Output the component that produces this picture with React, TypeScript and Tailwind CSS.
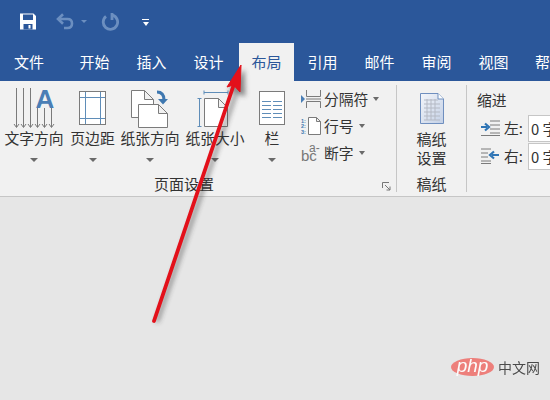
import React from "react";

const tabs = ["开始", "插入", "设计", "布局", "引用", "邮件", "审阅", "视图"];

const Caret = ({ className = "" }: { className?: string }) => (
  <span className={`block w-0 h-0 border-x-[4px] border-t-[4px] border-x-transparent border-t-[#6a6a6a] ${className}`} />
);

const BigButton = ({ width, label, children }: { width: string; label: string; children: React.ReactNode }) => (
  <div className={`${width} flex flex-col items-center shrink-0`}>
    <div className="h-[41px] flex items-start justify-center">{children}</div>
    <div className="h-[18px] leading-[18px] text-[14.8px] whitespace-nowrap">{label}</div>
    <Caret className="mt-[11px]" />
  </div>
);

const Page = ({ x, y, w, h, fold = 9 }: { x: number; y: number; w: number; h: number; fold?: number }) => (
  <path
    d={`M${x} ${y}H${x + w - fold}L${x + w} ${y + fold}V${y + h}H${x}Z M${x + w - fold} ${y}V${y + fold}H${x + w}`}
    fill="#fff"
    stroke="#7b7b7b"
    strokeWidth="1"
  />
);

const App = () => {
  return (
    <div className="relative w-[550px] h-[400px] overflow-hidden flex flex-col bg-[#e6e6e6] text-[#333] font-['Noto_Sans_CJK_SC','Noto_Sans',sans-serif]">
      {/* quick access bar */}
      <div className="h-[43px] bg-[#2b579a] flex items-center shrink-0 pl-[20px]">
        <svg width="16" height="17" viewBox="0 0 16 17">
          <path d="M0 0.5H13.5L16 3V16.5H0Z" fill="#fff" />
          <rect x="3" y="1.5" width="10" height="5.5" fill="#2b579a" />
          <rect x="3.5" y="11" width="9" height="5.5" fill="#2b579a" />
          <rect x="8.5" y="12" width="2" height="3.5" fill="#fff" />
        </svg>
        <svg className="ml-[20px]" width="18" height="17" viewBox="0 0 18 17" fill="none" stroke="#6c8fc0" strokeWidth="2.6">
          <path d="M2.5 6H11.5C14.5 6 16 8 16 10.5C16 13 14.5 15 11.5 15H8" />
          <path d="M7 1.2L2 6L7 10.8" />
        </svg>
        <Caret className="ml-[7px] !border-t-[#6c8fc0] !border-x-[3px] !border-t-[3px]" />
        <svg className="ml-[14px]" width="18" height="19" viewBox="0 0 18 19" fill="none" stroke="#6c8fc0" strokeWidth="2.8">
          <path d="M5 4.4A7.2 7.2 0 1 0 11.5 3.2" />
          <path d="M11 1V8" />
        </svg>
        <div className="ml-[23px] flex flex-col items-center gap-[2px] mt-[1px]">
          <span className="block w-[7px] h-px bg-white" />
          <Caret className="!border-t-white !border-x-[3.5px]" />
        </div>
      </div>

      {/* tabs */}
      <div className="h-[38px] bg-[#2b579a] flex shrink-0 text-white text-[15px] leading-[38px]">
        <div className="w-[66px] pl-[14px] shrink-0">文件</div>
        {tabs.map((t) =>
          t === "布局" ? (
            <div key={t} className="w-[55px] ml-[2px] shrink-0 text-center bg-[#f1f1f1] text-[#2b579a]">
              {t}
            </div>
          ) : (
            <div key={t} className="w-[57px] shrink-0 text-center">
              {t}
            </div>
          ),
        )}
        <div className="pl-[13px] whitespace-nowrap">帮助</div>
      </div>

      {/* ribbon */}
      <div className="h-[116px] shrink-0 bg-[#f1f1f1] border-b border-[#c6c6c6] flex">
        <div className="w-[396px] shrink-0 flex flex-col pt-[7px] relative">
          <div className="flex h-[90px] pl-[3px]">
            <BigButton width="w-[62px]" label="文字方向">
              <svg width="42" height="41" viewBox="0 0 42 41" fill="none" stroke="#7a7a7a">
                {[3.5, 10.5, 17.5].map((x) => (
                  <path key={x} d={`M${x} 0V39M${x - 2.5} 36L${x} 39.5L${x + 2.5} 36`} />
                ))}
                {[24.5, 31.5, 38.5].map((x) => (
                  <path key={x} d={`M${x} 20V39M${x - 2.5} 36L${x} 39.5L${x + 2.5} 36`} />
                ))}
                <text x="32" y="20" textAnchor="middle" fontSize="26" fontWeight="700" fontFamily="Liberation Sans" fill="#4a7eb5" stroke="none">
                  A
                </text>
              </svg>
            </BigButton>
            <BigButton width="w-[55px]" label="页边距">
              <svg className="mt-[3px]" width="27" height="35" viewBox="0 0 27 35" fill="#fff">
                <rect x="0.5" y="0.5" width="26" height="33" stroke="#7b7b7b" />
                <path d="M6.5 1V33M21.5 1V33M1 6.5H26M1 27.5H26" stroke="#5f8db8" fill="none" />
              </svg>
            </BigButton>
            <BigButton width="w-[60px]" label="纸张方向">
              <svg className="mt-[2px]" width="38" height="38" viewBox="0 0 38 38">
                <Page x={0.5} y={0.5} w={22} h={27} />
                <Page x={7.5} y={14.5} w={29} h={23} />
                <path d="M26 2C31 2 33 5 33 10" fill="none" stroke="#3f78b0" strokeWidth="3" />
                <path d="M27 9H37L32 14.5Z" fill="#3f78b0" />
              </svg>
            </BigButton>
            <BigButton width="w-[70px]" label="纸张大小">
              <svg className="mt-[2px] ml-[-2px]" width="34" height="38" viewBox="0 0 34 38" fill="none">
                <Page x={7.5} y={8.5} w={23} h={28} />
                <path d="M7 2.5H31M7 0.5V4.5M31 0.5V4.5M2.5 8V37M0.5 8.5H4.5M0.5 36.5H4.5" stroke="#5f8db8" />
              </svg>
            </BigButton>
            <BigButton width="w-[44px]" label="栏">
              <svg className="mt-[3px]" width="26" height="35" viewBox="0 0 26 35">
                <rect x="0.5" y="0.5" width="25" height="33" fill="#fff" stroke="#7b7b7b" />
                <path d="M3 10.5H12M14 10.5H23M3 14.5H12M14 14.5H23M3 18.5H12M14 18.5H23M3 22.5H12M14 22.5H23M3 26.5H12M14 26.5H23" stroke="#5f8db8" />
              </svg>
            </BigButton>
            <div className="flex flex-col text-[14.8px] ml-[7px] gap-[7px] pt-[1px]">
              <div className="h-[20px] flex items-center">
                <svg width="20" height="18" viewBox="0 0 20 18" fill="none">
                  <path d="M0 5L4 9L0 13Z" fill="#4a7eb5" />
                  <path d="M5.5 0V6.5H19.5V0M5.5 18V11.5H19.5V18M5 9H20" stroke="#7b7b7b" />
                </svg>
                <span className="ml-[3px] leading-[20px]">分隔符</span>
                <Caret className="ml-[5px] !border-x-[3.5px]" />
              </div>
              <div className="h-[20px] flex items-center">
                <svg width="20" height="18" viewBox="0 0 20 18" fill="none">
                  <text x="0" y="5.5" fontSize="5.5" fontWeight="700" fontFamily="Liberation Sans" fill="#3f78b0">1:</text>
                  <text x="0" y="11" fontSize="5.5" fontWeight="700" fontFamily="Liberation Sans" fill="#3f78b0">2:</text>
                  <text x="0" y="16.5" fontSize="5.5" fontWeight="700" fontFamily="Liberation Sans" fill="#3f78b0">3:</text>
                  <Page x={7.5} y={0.5} w={12} h={17} fold={4} />
                </svg>
                <span className="ml-[3px] leading-[20px]">行号</span>
                <Caret className="ml-[5px] !border-x-[3.5px]" />
              </div>
              <div className="h-[20px] flex items-center">
                <svg width="20" height="20" viewBox="0 0 20 20" fontFamily="Liberation Sans" fill="#777">
                  <text x="0" y="18" fontSize="15">bc</text>
                  <text x="8" y="9" fontSize="12">a-</text>
                </svg>
                <span className="ml-[3px] leading-[20px]">断字</span>
                <Caret className="ml-[5px] !border-x-[3.5px]" />
              </div>
            </div>
          </div>
          <div className="text-center text-[15px] leading-[18px] pr-[28px] mt-[-3px]">页面设置</div>
          <svg className="absolute right-[5px] bottom-[5px]" width="9" height="9" viewBox="0 0 9 9" fill="none" stroke="#777">
            <path d="M0.5 6V0.5H7M3 3L8 8M8 4.5V8H4.5" />
          </svg>
        </div>

        <div className="w-px my-[4px] bg-[#c6c6c6] shrink-0" />

        <div className="w-[69px] shrink-0 flex flex-col items-center pt-[12px]">
          <svg width="24" height="31" viewBox="0 0 24 31">
            <defs>
              <linearGradient id="sheet" x1="0" y1="0" x2="1" y2="1">
                <stop offset="0" stopColor="#f4f6fa" />
                <stop offset="1" stopColor="#c3d0e6" />
              </linearGradient>
            </defs>
            <path d="M0.5 0.5H18L23.5 6V30.5H0.5Z" fill="url(#sheet)" stroke="#6f8fbf" />
            <path d="M18 0.5V6H23.5" fill="#fff" stroke="#6f8fbf" />
            <path d="M4 7H18M4 11H20M4 15H20M4 19H20M4 23H20M4 27H20M7 6V27M11 6V27M15 6V27" stroke="#b4b9c4" fill="none" />
          </svg>
          <div className="text-[15px] leading-[19px] text-center mt-[5px]">
            稿纸
            <br />
            设置
          </div>
          <div className="text-[15px] leading-[18px] mt-[8px]">稿纸</div>
        </div>

        <div className="w-px my-[4px] bg-[#c6c6c6] shrink-0" />

        <div className="flex-1 pl-[10px] pt-[10px] text-[14.8px] min-w-0">
          <div className="leading-[18px] h-[23px]">缩进</div>
          <div className="flex items-center h-[28px] pl-[4px]">
            <svg className="shrink-0" width="19" height="16" viewBox="0 0 19 16" fill="none">
              <path d="M9 1H19M9 5H19M9 9H19M9 13H19M0 15.5H19" stroke="#7b7b7b" />
              <path d="M0 7H6M4 3.5L8 7L4 10.5" stroke="#2f75b5" strokeWidth="2.2" />
            </svg>
            <span className="ml-[4px] w-[24px] shrink-0">左:</span>
            <div className="w-[60px] h-[27px] shrink-0 bg-white border border-[#c6c6c6] pl-[2px] leading-[25px] whitespace-nowrap">0 字</div>
          </div>
          <div className="flex items-center h-[28px] pl-[4px]">
            <svg className="shrink-0" width="19" height="16" viewBox="0 0 19 16" fill="none">
              <path d="M0 1H10M0 5H7M0 9H7M0 13H10M0 15.5H10" stroke="#7b7b7b" />
              <path d="M18 7H11M13 3.5L9 7L13 10.5" stroke="#2f75b5" strokeWidth="2.2" />
            </svg>
            <span className="ml-[4px] w-[24px] shrink-0">右:</span>
            <div className="w-[60px] h-[27px] shrink-0 bg-white border border-[#c6c6c6] pl-[2px] leading-[25px] whitespace-nowrap">0 字</div>
          </div>
        </div>
      </div>

      {/* annotation arrow */}
      <svg className="absolute inset-0 pointer-events-none" width="550" height="400" viewBox="0 0 550 400">
        <defs>
          <filter id="blur" x="-30%" y="-30%" width="160%" height="160%">
            <feGaussianBlur stdDeviation="2.4" />
          </filter>
        </defs>
        <g filter="url(#blur)" opacity="0.55" fill="#333" stroke="#333">
          <path d="M157 322L237 90" strokeWidth="3.5" />
          <path d="M244 70L229 90L245 96Z" />
        </g>
        <path d="M154 321L234 84" stroke="#e3101a" strokeWidth="3.8" strokeLinecap="round" />
        <path d="M241 65L227 87L233.5 85L240 92Z" fill="#e3101a" stroke="#e3101a" strokeLinejoin="round" />
      </svg>

      {/* watermark */}
      <div className="absolute left-[451px] top-[358px] flex items-center opacity-90">
        <div className="w-[43px] h-[18px] rounded-[50%] bg-[#ee7470] flex items-center justify-center text-white italic font-['Liberation_Sans',sans-serif] text-[19px] leading-[18px] pb-[2px]">
          php
        </div>
        <div className="ml-[4px] text-[14px] leading-[18px] text-[#3a3a3a] whitespace-nowrap">中文网</div>
      </div>
    </div>
  );
};

export default App;
